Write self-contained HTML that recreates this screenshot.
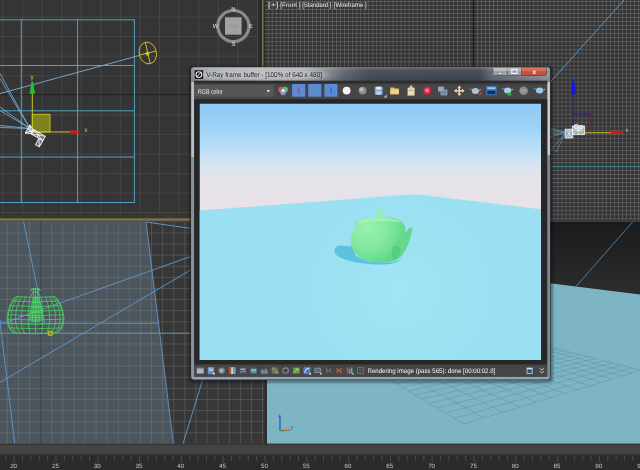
<!DOCTYPE html>
<html lang="en"><head><meta charset="utf-8"><title>V-Ray frame buffer</title>
<style>html,body{margin:0;padding:0;background:#323232;width:640px;height:470px;overflow:hidden}svg text{white-space:pre;filter:url(#tb);text-rendering:geometricPrecision}</style>
</head><body>
<svg width="640" height="470" viewBox="0 0 640 470" style="display:block"><defs><pattern id="gTL" x="2.5" y="16.5" width="19.56" height="19.56" patternUnits="userSpaceOnUse">
<path d="M0.5 0V19.56M0 0.5H19.56" stroke="#444444" stroke-width="1" fill="none"/></pattern>
<pattern id="gTR" x="473" y="1" width="4.025" height="4.025" patternUnits="userSpaceOnUse">
<rect width="4.025" height="4.025" fill="#333333"/><path d="M0.5 0V4.025M0 0.5H4.025" stroke="#6a6a6a" stroke-width="0.62" fill="none"/></pattern>
<pattern id="gBL" x="40.1" y="232.5" width="11.1" height="11.1" patternUnits="userSpaceOnUse">
<path d="M0.5 0V11.1M0 0.5H11.1" stroke="#626262" stroke-width="0.6" fill="none"/></pattern>
<linearGradient id="sky" x1="0" y1="103.5" x2="0" y2="212" gradientUnits="userSpaceOnUse">
<stop offset="0" stop-color="#8dcaf5"/><stop offset="0.2" stop-color="#9cd2f6"/><stop offset="0.4" stop-color="#b7def6"/><stop offset="0.52" stop-color="#cfe3f2"/><stop offset="0.62" stop-color="#dfe4ee"/><stop offset="0.75" stop-color="#e7e3ea"/><stop offset="1" stop-color="#e9e1e6"/></linearGradient>
<linearGradient id="brbg" x1="0" y1="222" x2="0" y2="295" gradientUnits="userSpaceOnUse">
<stop offset="0" stop-color="#1b1b1b"/><stop offset="1" stop-color="#2d2d2d"/></linearGradient>
<linearGradient id="title" x1="191" y1="0" x2="550" y2="0" gradientUnits="userSpaceOnUse">
<stop offset="0" stop-color="#90949a"/><stop offset="0.05" stop-color="#a2a6ac"/><stop offset="0.30" stop-color="#a4a8ae"/><stop offset="0.37" stop-color="#8d939a"/><stop offset="0.43" stop-color="#606870"/><stop offset="0.50" stop-color="#485058"/><stop offset="0.80" stop-color="#434b53"/><stop offset="0.84" stop-color="#666e76"/><stop offset="1" stop-color="#969ca4"/></linearGradient>
<linearGradient id="titlev" x1="0" y1="67.6" x2="0" y2="81" gradientUnits="userSpaceOnUse">
<stop offset="0" stop-color="#ffffff" stop-opacity="0.22"/><stop offset="0.12" stop-color="#ffffff" stop-opacity="0.08"/><stop offset="0.5" stop-color="#000000" stop-opacity="0"/><stop offset="1" stop-color="#000000" stop-opacity="0.14"/></linearGradient>
<radialGradient id="tea" cx="368" cy="228" r="42" gradientUnits="userSpaceOnUse"><stop offset="0" stop-color="#98f0ae"/><stop offset="0.45" stop-color="#84ea9f"/><stop offset="0.8" stop-color="#68dc8c"/><stop offset="1" stop-color="#5cd484"/></radialGradient>
<radialGradient id="floorhl" cx="400" cy="290" r="120" gradientUnits="userSpaceOnUse"><stop offset="0" stop-color="#a6ecf6" stop-opacity="0.5"/><stop offset="1" stop-color="#9ce0f2" stop-opacity="0"/></radialGradient>
<filter id="b1"><feGaussianBlur stdDeviation="0.5"/></filter>
<filter id="b2"><feGaussianBlur stdDeviation="1.2"/></filter>
<filter id="b3"><feGaussianBlur stdDeviation="2.5"/></filter>
<filter id="b03"><feGaussianBlur stdDeviation="0.35"/></filter>
<filter id="tb" x="-5%" y="-30%" width="110%" height="160%"><feGaussianBlur stdDeviation="0.28"/></filter>
<clipPath id="cTL"><rect x="0" y="0" width="262" height="218"/></clipPath>
<clipPath id="cTR"><rect x="265" y="0" width="375" height="220.5"/></clipPath>
<clipPath id="cBL"><rect x="0" y="221.5" width="264.5" height="222.5"/></clipPath>
<clipPath id="cBR"><rect x="267" y="222" width="373" height="222"/></clipPath>
<clipPath id="cIMG"><rect x="199.5" y="103.5" width="341.5" height="256.5"/></clipPath></defs>
<rect width="640" height="470" fill="#323232"/>
<g clip-path="url(#cTL)">
<rect x="0" y="0" width="262" height="218" fill="#353535"/>
<rect x="0" y="0" width="262" height="218" fill="url(#gTL)"/>
<rect x="0" y="94.2" width="262" height="1.2" fill="#1e1e1e"/>
<line x1="21.3" y1="19.5" x2="21.3" y2="202.5" stroke="#52a3c3" stroke-width="1"/>
<line x1="77.6" y1="19.5" x2="77.6" y2="202.5" stroke="#52a3c3" stroke-width="1"/>
<line x1="134.4" y1="19.5" x2="134.4" y2="202.5" stroke="#52a3c3" stroke-width="1"/>
<line x1="0" y1="19.8" x2="134.9" y2="19.8" stroke="#52a3c3" stroke-width="1"/>
<line x1="0" y1="65.5" x2="134.9" y2="65.5" stroke="#52a3c3" stroke-width="1"/>
<line x1="0" y1="110.8" x2="134.9" y2="110.8" stroke="#52a3c3" stroke-width="1"/>
<line x1="0" y1="157" x2="134.9" y2="157" stroke="#52a3c3" stroke-width="1"/>
<line x1="0" y1="202.5" x2="134.9" y2="202.5" stroke="#52a3c3" stroke-width="1"/>
<line x1="0" y1="93.6" x2="140" y2="55.3" stroke="#78b0dc" stroke-width="0.9"/>
<line x1="30" y1="128.5" x2="0" y2="73.5" stroke="#78b0dc" stroke-width="0.9" opacity="0.9"/>
<line x1="30" y1="128.5" x2="0" y2="78.5" stroke="#78b0dc" stroke-width="0.9" opacity="0.9"/>
<line x1="30" y1="128.5" x2="0" y2="107" stroke="#78b0dc" stroke-width="0.9" opacity="0.9"/>
<line x1="30" y1="128.5" x2="0" y2="110.5" stroke="#78b0dc" stroke-width="0.9" opacity="0.9"/>
<line x1="30" y1="128.5" x2="0" y2="125.5" stroke="#78b0dc" stroke-width="0.9" opacity="0.9"/>
<line x1="30" y1="128.5" x2="0" y2="127.5" stroke="#78b0dc" stroke-width="0.9" opacity="0.9"/>
<g transform="translate(147.8 53) rotate(-13)" stroke="#ccc032" fill="none" stroke-width="0.9"><ellipse cx="0" cy="0" rx="8.6" ry="11"/><line x1="-8.4" y1="0" x2="8.4" y2="0"/><line x1="0" y1="-10.8" x2="0" y2="10.8"/><circle cx="-0.5" cy="0.5" r="1.6" fill="#d8c832"/></g>
<rect x="32.3" y="114.3" width="17.7" height="17.6" fill="#80801e" stroke="#c8c828" stroke-width="0.9"/>
<line x1="32.3" y1="132" x2="32.3" y2="92" stroke="#c8c828" stroke-width="1"/>
<line x1="32.3" y1="132" x2="70.5" y2="132" stroke="#c8c828" stroke-width="1"/>
<path d="M32.3 80.8L33.3 82.6L35 93.8H29.6L31.3 82.6Z" fill="#20c030"/>
<path d="M80.6 132L78.6 131.1L70.5 130V134L78.6 132.9Z" fill="#e41414"/>
<text x="30.6" y="78.5" font-family="'Liberation Sans', sans-serif" font-size="6.5" fill="#d8d030">y</text>
<text x="84.3" y="131.6" font-family="'Liberation Sans', sans-serif" font-size="6.5" fill="#e0c040">x</text>
<g transform="translate(27.6 129) rotate(30)" stroke="#f2f2f2" stroke-width="0.9" fill="#c8d4dc" fill-opacity="0.35" stroke-linejoin="round"><path d="M0 -4.6V4.6L5.8 1.9V-1.9Z"/><path d="M0 -4.6L5.8 1.9M0 4.6L5.8 -1.9M0 0H5.8"/><rect x="5.8" y="-2.5" width="13.2" height="5"/><path d="M5.8 -2.5L19 2.5M5.8 2.5L19 -2.5M12.4 -2.5V2.5"/><rect x="14.6" y="2.5" width="4.4" height="7.2"/><path d="M14.6 2.5L19 9.7"/></g>
<circle cx="233.4" cy="26.1" r="15.6" fill="none" stroke="#8e8e8e" stroke-width="3.2"/>
<circle cx="233.4" cy="26.1" r="17" fill="none" stroke="#6a6a6a" stroke-width="0.8"/>
<rect x="225" y="17.3" width="16.6" height="17.4" fill="#a2a2a2"/>
<text x="233.3" y="27.7" font-family="'Liberation Sans', sans-serif" font-size="4.5" fill="#8c8c8c" text-anchor="middle">TOP</text>
<g font-family="'Liberation Sans', sans-serif" font-size="6" fill="#bdbdbd" text-anchor="middle" font-weight="bold"><text x="233.4" y="11.2">N</text><text x="233.4" y="46.4">S</text><text x="215.6" y="28.4">W</text><text x="250.8" y="28.4">E</text></g>
</g>
<rect x="0" y="214.2" width="262" height="3.8" fill="#38382e"/>
<rect x="0" y="218.3" width="264" height="2.5" fill="#7c7250"/>
<rect x="258.3" y="0" width="3.7" height="218" fill="#2c2c2a"/>
<rect x="262" y="0" width="1.7" height="220.5" fill="#7a7248"/>
<rect x="263.7" y="0" width="1.6" height="221" fill="#2c2c2c"/>
<g clip-path="url(#cTR)">
<rect x="265" y="0" width="375" height="221" fill="#373737"/>
<rect x="265" y="0" width="375" height="221" fill="url(#gTR)"/>
<rect x="472.8" y="0" width="1.5" height="221" fill="#222222"/>
<line x1="624" y1="0" x2="546" y2="86.9" stroke="#5a94c0" stroke-width="1"/>
<line x1="540" y1="166.6" x2="640" y2="166.6" stroke="#2f908b" stroke-width="0.9"/>
<line x1="573.3" y1="132.6" x2="573.3" y2="92" stroke="#1c1cc0" stroke-width="1"/>
<path d="M573.3 79.4L574.3 81.4L576 94.2H570.6L572.3 81.4Z" fill="#1616e4"/>
<line x1="573.3" y1="114.2" x2="591" y2="114.2" stroke="#26268c" stroke-width="1"/>
<line x1="591" y1="114.2" x2="591" y2="132.6" stroke="#6c2028" stroke-width="1"/>
<line x1="584" y1="132.7" x2="611" y2="132.7" stroke="#c8c828" stroke-width="1.1"/>
<path d="M623.6 132.7L621.6 131.8L610.5 130.8V134.6L621.6 133.6Z" fill="#e41414"/>
<text x="625.6" y="132.2" font-family="'Liberation Sans', sans-serif" font-size="6" fill="#d8c040">x</text>
<text x="572.2" y="78.6" font-family="'Liberation Sans', sans-serif" font-size="5.5" fill="#3434c8" opacity="0.8">z</text>
<line x1="566" y1="132.5" x2="548" y2="127.5" stroke="#6aa8d0" stroke-width="0.8" opacity="0.7"/>
<line x1="566" y1="132.5" x2="548" y2="130.5" stroke="#6aa8d0" stroke-width="0.8" opacity="0.7"/>
<line x1="566" y1="132.5" x2="548" y2="134" stroke="#6aa8d0" stroke-width="0.8" opacity="0.7"/>
<line x1="566" y1="132.5" x2="548" y2="137.5" stroke="#6aa8d0" stroke-width="0.8" opacity="0.7"/>
<line x1="566" y1="132.5" x2="551" y2="150" stroke="#6aa8d0" stroke-width="0.8" opacity="0.7"/>
<line x1="566" y1="132.5" x2="556" y2="152" stroke="#6aa8d0" stroke-width="0.8" opacity="0.7"/>
<g stroke="#f6f6f6" stroke-width="0.8" stroke-linejoin="round"><rect x="565.2" y="129.2" width="7.6" height="8.8" fill="#a4c6e2" fill-opacity="0.8"/><path d="M565.2 129.2L572.8 138M565.2 138L572.8 129.2M569 129.2V138" fill="none" stroke-width="0.6"/><rect x="572.4" y="126" width="12.2" height="8.6" fill="#e8ecf0" fill-opacity="0.6"/><circle cx="576.4" cy="126.6" r="2.3" fill="#d8dde2" fill-opacity="0.7"/><circle cx="581" cy="127.2" r="1.9" fill="#d8dde2" fill-opacity="0.7"/><path d="M572.4 126L584.6 134.6M572.4 134.6L584.6 126M578.5 126V134.6M572.4 130.3H584.6" fill="none" stroke-width="0.55"/></g>
<g font-family="'Liberation Sans', sans-serif" font-size="6.6" fill="#e2e2e2"><text x="268.1" y="6.6" textLength="10.4" lengthAdjust="spacingAndGlyphs">[+]</text><text x="280.3" y="6.6" textLength="20.3" lengthAdjust="spacingAndGlyphs">[Front ]</text><text x="302.3" y="6.6" textLength="29.2" lengthAdjust="spacingAndGlyphs">[Standard ]</text><text x="333.8" y="6.6" textLength="32.8" lengthAdjust="spacingAndGlyphs">[Wireframe ]</text></g>
</g>
<rect x="265" y="220.5" width="375" height="1.6" fill="#3c3c3c"/>
<g clip-path="url(#cBL)">
<rect x="0" y="221" width="265" height="223" fill="#373737"/>
<rect x="0" y="221" width="265" height="223" fill="url(#gBL)"/>
<rect x="40.1" y="221" width="1.1" height="223" fill="#1c1c1c"/>
<path d="M0 221H146L173.2 444H0Z" fill="#748aa0" fill-opacity="0.36"/>
<line x1="146" y1="221.5" x2="173.5" y2="444.5" stroke="#5f9ad0" stroke-width="0.9"/>
<line x1="146" y1="222" x2="191" y2="228.4" stroke="#5f9ad0" stroke-width="0.9"/>
<line x1="0" y1="324.4" x2="191" y2="256.4" stroke="#5f9ad0" stroke-width="0.9"/>
<line x1="0" y1="382.4" x2="191" y2="269.8" stroke="#5f9ad0" stroke-width="0.9"/>
<line x1="23.5" y1="221.5" x2="44.5" y2="323" stroke="#5f9ad0" stroke-width="0.9"/>
<line x1="0" y1="322" x2="15" y2="446" stroke="#5f9ad0" stroke-width="0.9"/>
<line x1="203.2" y1="378" x2="182.2" y2="446" stroke="#5f9ad0" stroke-width="0.9"/>
<line x1="0" y1="323.3" x2="158.6" y2="323.3" stroke="#429cba" stroke-width="1"/>
<line x1="0" y1="333.3" x2="192" y2="333.3" stroke="#429cba" stroke-width="1"/>
<circle cx="0" cy="322.5" r="2.4" fill="#4a80e0" opacity="0.75" filter="url(#b1)"/>
<g stroke="#48e060" stroke-width="0.75" fill="none" opacity="0.95"><path d="M16.0 296.6L14.6 298.1L13.2 299.6L12.4 301.2L11.6 302.7L10.7 304.2L9.9 305.7L9.4 307.2L9.0 308.7L8.5 310.2L8.1 311.8L7.7 313.3L7.5 314.8L7.3 316.3L7.1 317.8L6.9 319.4L7.2 320.9L7.5 322.4L7.8 323.9L8.0 325.4L8.8 326.9L9.6 328.4L10.4 330.0L12.2 331.5L14.0 333.0"/><path d="M16.7 296.6L15.3 298.1L14.0 299.6L13.2 301.2L12.4 302.7L11.6 304.2L10.8 305.7L10.3 307.2L9.9 308.7L9.4 310.2L9.0 311.8L8.6 313.3L8.4 314.8L8.2 316.3L8.0 317.8L7.9 319.4L8.2 320.9L8.4 322.4L8.7 323.9L9.0 325.4L9.7 326.9L10.5 328.4L11.3 330.0L13.0 331.5L14.7 333.0"/><path d="M18.6 296.6L17.4 298.1L16.2 299.6L15.5 301.2L14.8 302.7L14.1 304.2L13.3 305.7L12.9 307.2L12.5 308.7L12.1 310.2L11.7 311.8L11.4 313.3L11.2 314.8L11.1 316.3L10.9 317.8L10.8 319.4L11.0 320.9L11.2 322.4L11.5 323.9L11.7 325.4L12.3 326.9L13.1 328.4L13.8 330.0L15.3 331.5L16.9 333.0"/><path d="M21.7 296.6L20.7 298.1L19.8 299.6L19.2 301.2L18.6 302.7L18.0 304.2L17.4 305.7L17.1 307.2L16.7 308.7L16.4 310.2L16.1 311.8L15.8 313.3L15.7 314.8L15.5 316.3L15.4 317.8L15.3 319.4L15.5 320.9L15.7 322.4L15.9 323.9L16.1 325.4L16.6 326.9L17.2 328.4L17.8 330.0L19.0 331.5L20.3 333.0"/><path d="M25.8 296.6L25.0 298.1L24.4 299.6L24.0 301.2L23.5 302.7L23.1 304.2L22.7 305.7L22.5 307.2L22.2 308.7L22.0 310.2L21.8 311.8L21.6 313.3L21.5 314.8L21.4 316.3L21.3 317.8L21.2 319.4L21.4 320.9L21.5 322.4L21.6 323.9L21.8 325.4L22.1 326.9L22.6 328.4L23.0 330.0L23.8 331.5L24.8 333.0"/><path d="M30.5 296.6L30.1 298.1L29.7 299.6L29.5 301.2L29.3 302.7L29.1 304.2L28.9 305.7L28.8 307.2L28.6 308.7L28.5 310.2L28.4 311.8L28.3 313.3L28.2 314.8L28.2 316.3L28.1 317.8L28.1 319.4L28.2 320.9L28.3 322.4L28.3 323.9L28.4 325.4L28.6 326.9L28.8 328.4L29.0 330.0L29.5 331.5L29.9 333.0"/><path d="M35.5 296.6L35.5 298.1L35.5 299.6L35.5 301.2L35.5 302.7L35.5 304.2L35.5 305.7L35.5 307.2L35.5 308.7L35.5 310.2L35.5 311.8L35.5 313.3L35.5 314.8L35.5 316.3L35.5 317.8L35.5 319.4L35.5 320.9L35.5 322.4L35.5 323.9L35.5 325.4L35.5 326.9L35.5 328.4L35.5 330.0L35.5 331.5L35.5 333.0"/><path d="M40.5 296.6L40.9 298.1L41.3 299.6L41.5 301.2L41.7 302.7L41.9 304.2L42.1 305.7L42.2 307.2L42.4 308.7L42.5 310.2L42.6 311.8L42.7 313.3L42.8 314.8L42.8 316.3L42.9 317.8L42.9 319.4L42.8 320.9L42.7 322.4L42.7 323.9L42.6 325.4L42.4 326.9L42.2 328.4L42.0 330.0L41.5 331.5L41.1 333.0"/><path d="M45.2 296.6L46.0 298.1L46.6 299.6L47.0 301.2L47.5 302.7L47.9 304.2L48.3 305.7L48.5 307.2L48.8 308.7L49.0 310.2L49.2 311.8L49.4 313.3L49.5 314.8L49.6 316.3L49.7 317.8L49.8 319.4L49.6 320.9L49.5 322.4L49.4 323.9L49.2 325.4L48.9 326.9L48.4 328.4L48.0 330.0L47.2 331.5L46.2 333.0"/><path d="M49.3 296.6L50.3 298.1L51.2 299.6L51.8 301.2L52.4 302.7L53.0 304.2L53.6 305.7L53.9 307.2L54.3 308.7L54.6 310.2L54.9 311.8L55.2 313.3L55.3 314.8L55.5 316.3L55.6 317.8L55.7 319.4L55.5 320.9L55.3 322.4L55.1 323.9L54.9 325.4L54.4 326.9L53.8 328.4L53.2 330.0L52.0 331.5L50.7 333.0"/><path d="M52.4 296.6L53.6 298.1L54.8 299.6L55.5 301.2L56.2 302.7L56.9 304.2L57.7 305.7L58.1 307.2L58.5 308.7L58.9 310.2L59.3 311.8L59.6 313.3L59.8 314.8L59.9 316.3L60.1 317.8L60.2 319.4L60.0 320.9L59.8 322.4L59.5 323.9L59.3 325.4L58.7 326.9L57.9 328.4L57.2 330.0L55.7 331.5L54.1 333.0"/><path d="M54.3 296.6L55.7 298.1L57.0 299.6L57.8 301.2L58.6 302.7L59.4 304.2L60.2 305.7L60.7 307.2L61.1 308.7L61.6 310.2L62.0 311.8L62.4 313.3L62.6 314.8L62.8 316.3L63.0 317.8L63.1 319.4L62.8 320.9L62.6 322.4L62.3 323.9L62.0 325.4L61.3 326.9L60.5 328.4L59.7 330.0L58.0 331.5L56.3 333.0"/><path d="M55.0 296.6L56.4 298.1L57.8 299.6L58.6 301.2L59.4 302.7L60.3 304.2L61.1 305.7L61.6 307.2L62.0 308.7L62.5 310.2L62.9 311.8L63.3 313.3L63.5 314.8L63.7 316.3L63.9 317.8L64.1 319.4L63.8 320.9L63.5 322.4L63.2 323.9L63.0 325.4L62.2 326.9L61.4 328.4L60.6 330.0L58.8 331.5L57.0 333.0"/><path d="M16.0 296.6Q35.5 298.2 55.0 296.6"/><path d="M12.5 301.0Q35.5 302.6 58.5 301.0"/><path d="M9.9 305.7Q35.5 307.3 61.1 305.7"/><path d="M8.5 310.4Q35.5 312.0 62.5 310.4"/><path d="M7.5 314.8Q35.5 316.4 63.5 314.8"/><path d="M6.9 319.2Q35.5 320.8 64.1 319.2"/><path d="M7.7 323.5Q35.5 325.1 63.3 323.5"/><path d="M9.3 327.9Q35.5 329.5 61.7 327.9"/><path d="M14.0 333.0Q35.5 334.6 57.0 333.0"/><path d="M31 296.4C31 294 33 293.5 33.5 292C32 291.5 30.6 290.6 31 289.3C32 288.2 39 288.2 40.2 289.3C40.6 290.6 39 291.5 37.6 292C38 293.5 40 294 40 296.4"/><path d="M31 289.5H40.2M33.5 292H37.6M35.5 288.5V296.4M33.4 288.6V296.4M37.7 288.6V296.4"/><path d="M33.2 297L29.3 318.5C29.3 322.6 42.6 322.6 42.8 318.5L38.4 297Z" fill="#48e060" fill-opacity="0.45"/><path d="M34.4 297L32.2 321.4M35.8 297V321.8M37.2 297L39.6 321.4M32.2 302.5H39.6M31.3 307.5H40.6M30.5 312.5H41.6M29.8 317.5H42.4"/></g>
<rect x="48.2" y="331.2" width="4" height="4" fill="#70a030" stroke="#e0c020" stroke-width="0.8"/>
</g>
<rect x="264.5" y="221" width="2.5" height="223" fill="#2e2e2e"/>
<g clip-path="url(#cBR)">
<rect x="267" y="222" width="373" height="222" fill="url(#brbg)"/>
<path d="M267 247.6L640 294.6V444H267Z" fill="#7eb5c4"/>
<line x1="633.5" y1="221" x2="575.3" y2="287.2" stroke="#4a7ea6" stroke-width="1"/>
<path d="M463.7 424.0L375.2 371.1M463.7 424.0L641.0 370.4M484.0 417.9L392.1 368.3M454.3 418.4L631.2 367.8M502.7 412.2L408.0 365.6M445.4 413.1L621.7 365.4M519.9 407.0L423.1 363.1M437.1 408.1L612.6 363.0M536.0 402.1L437.4 360.7M429.3 403.5L603.9 360.8M550.9 397.6L451.0 358.4M422.0 399.0L595.5 358.6M564.8 393.4L463.9 356.3M415.0 394.9L587.5 356.5M577.8 389.5L476.1 354.2M408.4 390.9L579.7 354.5M590.0 385.8L487.8 352.3M402.1 387.2L572.2 352.5M601.5 382.4L498.9 350.4M396.2 383.7L565.0 350.7M612.2 379.1L509.5 348.7M390.6 380.3L558.1 348.9M622.4 376.0L519.6 347.0M385.2 377.1L551.4 347.1M631.9 373.1L529.3 345.4M380.1 374.0L544.9 345.4M641.0 370.4L538.6 343.8M375.2 371.1L538.6 343.8" stroke="#4a8799" stroke-width="0.7" fill="none" opacity="0.5"/>
<line x1="280" y1="430.7" x2="280" y2="417" stroke="#1850d0" stroke-width="1.2"/>
<line x1="280" y1="430.6" x2="290" y2="430.2" stroke="#c06030" stroke-width="1.2"/>
<line x1="280" y1="430.6" x2="284" y2="431" stroke="#30a050" stroke-width="1"/>
<text x="278.6" y="416.6" font-family="'Liberation Sans', sans-serif" font-size="4.5" fill="#1040c0" font-weight="bold">z</text>
<text x="290.8" y="429.4" font-family="'Liberation Sans', sans-serif" font-size="5" fill="#30907a" font-weight="bold">y</text>
</g>
<rect x="0" y="444" width="640" height="10.6" fill="#444444"/>
<rect x="0" y="443.6" width="640" height="1" fill="#2a2a2a"/>
<rect x="0" y="454.5" width="640" height="15.5" fill="#2b2b2b"/>
<path d="M5.84 455.2V460.8M14.20 455.2V462.3M22.56 455.2V460.8M30.92 455.2V460.8M39.28 455.2V460.8M47.64 455.2V460.8M56.00 455.2V462.3M64.36 455.2V460.8M72.72 455.2V460.8M81.08 455.2V460.8M89.44 455.2V460.8M97.80 455.2V462.3M106.16 455.2V460.8M114.52 455.2V460.8M122.88 455.2V460.8M131.24 455.2V460.8M139.60 455.2V462.3M147.96 455.2V460.8M156.32 455.2V460.8M164.68 455.2V460.8M173.04 455.2V460.8M181.40 455.2V462.3M189.76 455.2V460.8M198.12 455.2V460.8M206.48 455.2V460.8M214.84 455.2V460.8M223.20 455.2V462.3M231.56 455.2V460.8M239.92 455.2V460.8M248.28 455.2V460.8M256.64 455.2V460.8M265.00 455.2V462.3M273.36 455.2V460.8M281.72 455.2V460.8M290.08 455.2V460.8M298.44 455.2V460.8M306.80 455.2V462.3M315.16 455.2V460.8M323.52 455.2V460.8M331.88 455.2V460.8M340.24 455.2V460.8M348.60 455.2V462.3M356.96 455.2V460.8M365.32 455.2V460.8M373.68 455.2V460.8M382.04 455.2V460.8M390.40 455.2V462.3M398.76 455.2V460.8M407.12 455.2V460.8M415.48 455.2V460.8M423.84 455.2V460.8M432.20 455.2V462.3M440.56 455.2V460.8M448.92 455.2V460.8M457.28 455.2V460.8M465.64 455.2V460.8M474.00 455.2V462.3M482.36 455.2V460.8M490.72 455.2V460.8M499.08 455.2V460.8M507.44 455.2V460.8M515.80 455.2V462.3M524.16 455.2V460.8M532.52 455.2V460.8M540.88 455.2V460.8M549.24 455.2V460.8M557.60 455.2V462.3M565.96 455.2V460.8M574.32 455.2V460.8M582.68 455.2V460.8M591.04 455.2V460.8M599.40 455.2V462.3M607.76 455.2V460.8M616.12 455.2V460.8M624.48 455.2V460.8M632.84 455.2V460.8M641.20 455.2V462.3" stroke="#545454" stroke-width="0.8" fill="none"/>
<g font-family="'Liberation Sans', sans-serif" font-size="6.2" fill="#c6c6c6" text-anchor="middle"><text x="13.6" y="468.2">20</text><text x="55.4" y="468.2">25</text><text x="97.2" y="468.2">30</text><text x="139.0" y="468.2">35</text><text x="180.8" y="468.2">40</text><text x="222.6" y="468.2">45</text><text x="264.4" y="468.2">50</text><text x="306.2" y="468.2">55</text><text x="348.0" y="468.2">60</text><text x="389.8" y="468.2">65</text><text x="431.6" y="468.2">70</text><text x="473.4" y="468.2">75</text><text x="515.2" y="468.2">80</text><text x="557.0" y="468.2">85</text><text x="598.8" y="468.2">90</text><text x="640.6" y="468.2">95</text></g>
<rect x="189" y="66" width="364" height="317" rx="4" fill="#000" opacity="0.35" filter="url(#b2)"/>
<rect x="190.6" y="66.9" width="360" height="313.2" rx="3" fill="#2e3338"/>
<rect x="191.3" y="67.6" width="358.6" height="311.8" rx="2.6" fill="#9099a3"/>
<path d="M191.3 82.8V70.2Q191.3 67.6 194 67.6H547.3Q549.9 67.6 549.9 70.2V82.8Z" fill="url(#title)"/>
<path d="M191.3 82.8V70.2Q191.3 67.6 194 67.6H547.3Q549.9 67.6 549.9 70.2V82.8Z" fill="url(#titlev)"/>
<rect x="191.3" y="82" width="2.6" height="75" fill="#bcc2ca"/>
<rect x="547.4" y="82" width="2.6" height="73" fill="#c8ccd2"/>
<rect x="191.3" y="157" width="2.6" height="221" fill="#8892a0"/>
<rect x="547.4" y="155" width="2.6" height="223" fill="#7e8894"/>
<rect x="192" y="376.6" width="357" height="2.4" fill="#92a4b7"/>
<ellipse cx="262" cy="75" rx="66" ry="6" fill="#ffffff" opacity="0.35" filter="url(#b3)"/>
<rect x="194.7" y="70.3" width="8.4" height="8.6" fill="#0c0c0c"/>
<circle cx="198.9" cy="74.6" r="2.9" fill="none" stroke="#f0f0f0" stroke-width="1.1"/>
<line x1="196.6" y1="77.2" x2="201.3" y2="71.8" stroke="#f0f0f0" stroke-width="1"/>
<text x="206.2" y="76.9" font-family="'Liberation Sans', sans-serif" font-size="7" fill="#1e1e1e" textLength="115.8" lengthAdjust="spacingAndGlyphs">V-Ray frame buffer - [100% of 640 x 480]</text>
<path d="M492.8 67.4H546.8V73.5Q546.8 75.7 544.6 75.7H495Q492.8 75.7 492.8 73.5Z" fill="#3a3f45"/>
<rect x="493.3" y="67.6" width="13.6" height="7.7" fill="#9da2a9"/>
<rect x="507.5" y="67.6" width="13.8" height="7.7" fill="#999ea6"/>
<path d="M521.9 67.6H546.3V73.3Q546.3 75.3 544.3 75.3H521.9Z" fill="#c4503e"/>
<rect x="521.9" y="67.6" width="24.4" height="3.6" fill="#e08672" opacity="0.6"/>
<rect x="493.3" y="67.6" width="28" height="3.4" fill="#d0d4da" opacity="0.5"/>
<rect x="497.6" y="72.4" width="5" height="1.6" fill="#f6f6f6" stroke="#50545a" stroke-width="0.4"/>
<rect x="511.8" y="69.4" width="5.2" height="4" fill="none" stroke="#f6f6f6" stroke-width="1.1"/>
<text x="534.2" y="74.2" font-family="'Liberation Sans', sans-serif" font-size="6.4" font-weight="bold" fill="#ffffff" text-anchor="middle">x</text>
<rect x="194.2" y="80.8" width="353" height="296" fill="#464646"/>
<rect x="194.2" y="80.8" width="353" height="2.6" fill="#2c2c2c"/>
<rect x="194.2" y="83.4" width="353" height="1" fill="#3a3a3a"/>
<rect x="194.6" y="84.6" width="79.2" height="12.1" fill="#565656"/>
<text x="197.9" y="93.7" font-family="'Liberation Sans', sans-serif" font-size="6.8" fill="#ececec" textLength="24.6" lengthAdjust="spacingAndGlyphs">RGB color</text>
<path d="M266.6 90L268.3 92.4L270 90Z" fill="#e8e8e8"/>
<circle cx="281.2" cy="89.6" r="2.9" fill="#e05068"/><circle cx="285" cy="89.6" r="2.9" fill="#60c070"/><circle cx="283.1" cy="92.4" r="2.8" fill="#8a96d4"/><circle cx="283.1" cy="90.6" r="1.6" fill="#f0e8e8"/>
<rect x="292.1" y="83.9" width="13.1" height="12.8" rx="0.8" fill="#5a8bd6"/>
<rect x="297.7" y="87.3" width="1.9" height="6.4" fill="#d03040" opacity="0.55"/>
<rect x="308.2" y="83.9" width="13.1" height="12.8" rx="0.8" fill="#5a8bd6"/>
<rect x="313.9" y="87.3" width="1.9" height="6.4" fill="#40a860" opacity="0.55"/>
<rect x="324.4" y="83.9" width="13.1" height="12.8" rx="0.8" fill="#5a8bd6"/>
<rect x="330.0" y="87.3" width="1.9" height="6.4" fill="#3c5cb0" opacity="0.55"/>
<circle cx="346.6" cy="90.6" r="3.9" fill="#f4f4f4"/>
<circle cx="362.5" cy="90.6" r="3.9" fill="#8c8c8c"/><circle cx="361.5" cy="89.4" r="2" fill="#b8b8b8" filter="url(#b03)"/>
<rect x="374.7" y="86.7" width="8" height="8" rx="0.8" fill="#7fa4d0"/><rect x="376.2" y="86.7" width="5" height="3" fill="#dfe8f4"/><rect x="376.3" y="91.3" width="4.8" height="3.4" fill="#c4d4ea"/>
<path d="M386.6 94.6V97.4H383.8Z" fill="#c8c8c8"/>
<path d="M390.4 87.6H393.6L394.6 88.6H398.8V94.2H390.4Z" fill="#eec170"/><rect x="390.4" y="89.8" width="8.4" height="4.4" fill="#f4cf86"/>
<rect x="407.6" y="87.6" width="7" height="8" fill="#e6dcc2"/><rect x="409.8" y="85.6" width="2.6" height="3.4" fill="#d8c8a0"/><rect x="408.8" y="90" width="4.6" height="0.8" fill="#b09868"/>
<circle cx="427.2" cy="90.8" r="4.5" fill="#b82034"/><circle cx="427.2" cy="90.4" r="3" fill="#d84458"/><circle cx="427" cy="90.4" r="1.3" fill="#f0a0a8"/>
<rect x="438" y="86.6" width="6" height="5" fill="#8fa6c4"/><rect x="441" y="90" width="6" height="5" fill="#6f88ac" stroke="#c0cce0" stroke-width="0.5"/>
<path d="M459.3 85.6L461.3 88.2H460.1V89.9H462V88.7L464.6 90.8L462 92.9V91.6H460.1V93.4H461.3L459.3 96L457.3 93.4H458.5V91.6H456.6V92.9L454 90.8L456.6 88.7V89.9H458.5V88.2H457.3Z" fill="#ecd8b0"/>
<ellipse cx="475.4" cy="91" rx="3.6" ry="3" fill="#a8c4dc"/><path d="M471.4 90L470 88.6M479 90.4L480.8 89.6" stroke="#a8c4dc" stroke-width="1"/><path d="M478 94.4H481V91.6" stroke="#e05030" stroke-width="0.8" fill="none"/>
<rect x="486.2" y="86" width="10.4" height="9.2" fill="#3a78c0"/><rect x="487.4" y="87.2" width="8" height="2" fill="#9cc4ee"/><rect x="487.4" y="90.6" width="8" height="3.6" fill="#163058"/>
<ellipse cx="507.6" cy="90.6" rx="3.6" ry="3" fill="#a8cce6"/><path d="M503.6 89.6L502.2 88.2M511.2 90L513 89.2" stroke="#a8cce6" stroke-width="1"/><rect x="507.6" y="92.6" width="3.6" height="3" fill="#28b040"/>
<circle cx="523.6" cy="90.8" r="4.3" fill="#8a8a8a"/><rect x="520.6" y="89.2" width="6" height="3" fill="#a4a4a4" opacity="0.7"/>
<ellipse cx="539.6" cy="90.6" rx="3.6" ry="3" fill="#9cc8ec"/><path d="M535.6 89.6L534.2 88.2M543.2 90L545 89.2" stroke="#9cc8ec" stroke-width="1"/>
<rect x="194.2" y="99.2" width="353" height="265.5" fill="#272727"/>
<g clip-path="url(#cIMG)">
<rect x="199.5" y="103.5" width="341.5" height="256.5" fill="url(#sky)"/>
<path d="M199.5 210.6L415 194.3L541 209.2V360H199.5Z" fill="#9be0f2"/>
<rect x="199.5" y="194" width="341.5" height="166" fill="url(#floorhl)"/>
<path d="M334.4 251.6C334.6 247.5 337 245.2 340 245.4C344 245.6 348 246 352 246.4L356 256L370 262L392 262.6L401 259.2C398 262.6 392 264 384 264.4C372 264.8 358 263.4 350 261C342 258.6 334.6 255.6 334.4 251.6Z" fill="#5cc2df" filter="url(#b1)"/>
<g filter="url(#b03)">
<path d="M392 238L399 236C402.5 234.5 406.5 231.5 409 228.2C410.6 227.2 412.6 227.8 412.9 229C411.6 232 411 236 409.4 240.6C407.8 246 405.4 251 402.4 255C400 258 397 260 394 261L388 258L388 246Z" fill="#66d78c"/>
<path d="M393 246.4C397 245 400 247 401.4 250C400 254 397.6 258 394.4 260.6L389 258L389 248Z" fill="#58ce82"/>
<path d="M358.6 220.4C363 218.4 369 217.5 372.4 217.4L387.5 217.2C392 217.4 396 218.4 398.4 220C401 221.2 402.6 222.4 403.2 223.6C405 226 405.8 228 405.4 229.6C405 232.4 403.6 235.4 401.6 237.6C398.6 239.8 396 241.4 394.4 243.2C392.8 246 392 249.6 391.6 253C391.2 256.4 392.6 259.6 394.6 260.8C390.6 262 385 262.4 379.7 262.3C375 262.2 371.5 261.8 368.7 261C365.8 260 363 259 361 257.8C358.6 256.4 356.8 254.8 355.5 253C353.6 251 352.4 249 351.9 246.9C351 245 350.7 243 350.8 240.6C350.8 238.4 351.2 236.4 351.9 234.4C352.8 231.8 354.2 229.4 355.5 227.3C354.4 225.6 354.2 223.4 355.6 222.2C356.6 221.4 357.6 221 358.6 220.4Z" fill="url(#tea)"/>
<path d="M359 221C364 218.8 372 217.8 380 217.8C388 217.8 396 219 401 222.4C396 221.6 388 221 380 221.2C372 221.4 364 222.4 359 224Z" fill="#a6f2b8" opacity="0.8"/>
<path d="M376.4 217.6C377.4 216.8 377.5 215.8 377 215C375.4 214.2 374.8 213 375.2 212C376 210.6 377.8 210 379.6 210.1C381.6 210.2 383.4 211 383.9 212.2C384.2 213.4 383.4 214.4 381.8 215.2C381.4 216 381.6 216.8 382.6 217.6Z" fill="#96eeae"/>
</g>
</g>
<rect x="194.2" y="364.7" width="353" height="12" fill="#464646"/>
<g transform="translate(200.20 370.6) scale(0.86) translate(-200.20 -370.6)" opacity="0.86"><rect x="196.2" y="367.40000000000003" width="8" height="6.6" fill="#c8ccd2"/><rect x="196.2" y="367.40000000000003" width="8" height="1.6" fill="#8c98a8"/></g>
<g transform="translate(210.88 370.6) scale(0.86) translate(-210.88 -370.6)" opacity="0.86"><rect x="207.3" y="366.40000000000003" width="7.2" height="8.4" fill="#6a9cd8"/><rect x="208.3" y="368.0" width="5.2" height="3.4" fill="#b8d0ee"/><circle cx="214.3" cy="374.20000000000005" r="1.3" fill="#e8e8e8"/></g>
<g transform="translate(221.56 370.6) scale(0.86) translate(-221.56 -370.6)" opacity="0.86"><circle cx="221.6" cy="370.6" r="3.7" fill="#8c949c"/><circle cx="221.6" cy="370.6" r="1.8" fill="#c0c6cc"/></g>
<g transform="translate(232.24 370.6) scale(0.86) translate(-232.24 -370.6)" opacity="0.86"><rect x="228.4" y="366.6" width="2.6" height="8" fill="#d8502c"/><rect x="231.0" y="366.6" width="2.6" height="8" fill="#ece8e4"/><rect x="233.6" y="366.6" width="2.6" height="8" fill="#58c0e0"/></g>
<g transform="translate(242.92 370.6) scale(0.86) translate(-242.92 -370.6)" opacity="0.86"><rect x="238.9" y="367.20000000000005" width="8" height="6.8" fill="#50586a"/><rect x="239.9" y="368.20000000000005" width="6" height="1.6" fill="#a0d8a0"/><rect x="241.9" y="370.6" width="4.6" height="1.8" fill="#c060d0"/><rect x="239.5" y="371.0" width="2" height="2" fill="#40a0e0"/></g>
<g transform="translate(253.60 370.6) scale(0.86) translate(-253.60 -370.6)" opacity="0.86"><rect x="249.6" y="367.20000000000005" width="8" height="6.8" fill="#4070b0"/><rect x="250.6" y="369.0" width="6" height="2" fill="#d8d050"/><rect x="250.6" y="371.6" width="6" height="1.6" fill="#58b8e0"/></g>
<g transform="translate(264.28 370.6) scale(0.86) translate(-264.28 -370.6)" opacity="0.86"><path d="M260.3 374.20000000000005V370.6L262.3 368.6L264.3 371.20000000000005L265.9 367.0L268.3 371.0V374.20000000000005Z" fill="#7890b0"/></g>
<g transform="translate(274.96 370.6) scale(0.86) translate(-274.96 -370.6)" opacity="0.86"><rect x="271.2" y="367.0" width="7.6" height="7.2" fill="#7a7a52"/><rect x="271.2" y="367.0" width="3.8" height="3.6" fill="#94946a"/><rect x="275.0" y="370.6" width="3.8" height="3.6" fill="#94946a"/></g>
<g transform="translate(285.64 370.6) scale(0.86) translate(-285.64 -370.6)" opacity="0.86"><circle cx="285.6" cy="370.6" r="3.2" fill="none" stroke="#8c96a2" stroke-width="1.3"/></g>
<g transform="translate(296.32 370.6) scale(0.86) translate(-296.32 -370.6)" opacity="0.86"><rect x="292.3" y="367.0" width="8" height="7.2" fill="#58a840"/><rect x="295.3" y="368.0" width="4" height="2.6" fill="#b8dc70"/><rect x="293.3" y="371.20000000000005" width="3" height="2" fill="#8cc850"/></g>
<g transform="translate(307.00 370.6) scale(0.86) translate(-307.00 -370.6)" opacity="0.86"><rect x="302.8" y="366.40000000000003" width="8.4" height="8.4" rx="1" fill="#4c84d8"/><path d="M304.4 373.20000000000005A5 5 0 0 1 309.8 368.0" stroke="#f0f4fa" stroke-width="1.3" fill="none"/><circle cx="310.6" cy="374.40000000000003" r="1.2" fill="#e8e8e8"/></g>
<g transform="translate(317.68 370.6) scale(0.86) translate(-317.68 -370.6)" opacity="0.86"><rect x="313.7" y="367.20000000000005" width="8" height="6.2" fill="#8c98a8"/><rect x="314.7" y="368.40000000000003" width="6" height="3.6" fill="#5c6c88"/><circle cx="321.5" cy="374.40000000000003" r="1.1" fill="#e0e0e0"/></g>
<g transform="translate(328.36 370.6) scale(0.86) translate(-328.36 -370.6)" opacity="0.86"><path d="M326.4 367.6V373.6M330.4 367.6V373.6M326.4 370.6H330.4" stroke="#6c8078" stroke-width="1.2" fill="none"/></g>
<g transform="translate(339.04 370.6) scale(0.86) translate(-339.04 -370.6)" opacity="0.86"><path d="M336.0 368.0L338.4 370.6L336.0 373.20000000000005M342.0 368.0L339.6 370.6L342.0 373.20000000000005" stroke="#e07830" stroke-width="1.2" fill="none"/></g>
<g transform="translate(349.72 370.6) scale(0.86) translate(-349.72 -370.6)" opacity="0.86"><rect x="346.3" y="367.0" width="1.8" height="7.2" fill="#e05030"/><rect x="348.7" y="368.6" width="1.8" height="5.6" fill="#50b8e0"/><rect x="351.1" y="367.0" width="1.8" height="7.2" fill="#40c8d8"/><circle cx="353.5" cy="374.40000000000003" r="1" fill="#e0e0e0"/></g>
<g transform="translate(360.40 370.6) scale(0.86) translate(-360.40 -370.6)" opacity="0.86"><rect x="357.0" y="367.20000000000005" width="6.8" height="6.8" fill="none" stroke="#788088" stroke-width="1"/><path d="M359.0 369.20000000000005l2.8 2.8m0 -2.8l-2.8 2.8" stroke="#788088" stroke-width="0.8"/></g>
<text x="367.5" y="372.8" font-family="'Liberation Sans', sans-serif" font-size="6.6" fill="#f6f6f6" textLength="127.8" lengthAdjust="spacingAndGlyphs">Rendering image (pass 565): done [00:00:02.8]</text>
<rect x="527" y="368" width="5.2" height="5.6" fill="#2a5a78" stroke="#b8d4e4" stroke-width="0.8"/><rect x="527" y="368" width="5.2" height="1.4" fill="#c8dcea"/>
<path d="M539.6 368.2L541.8 370.2L544 368.2M539.6 371L541.8 373L544 371" stroke="#d0d4d8" stroke-width="0.9" fill="none"/></svg>
</body></html>
